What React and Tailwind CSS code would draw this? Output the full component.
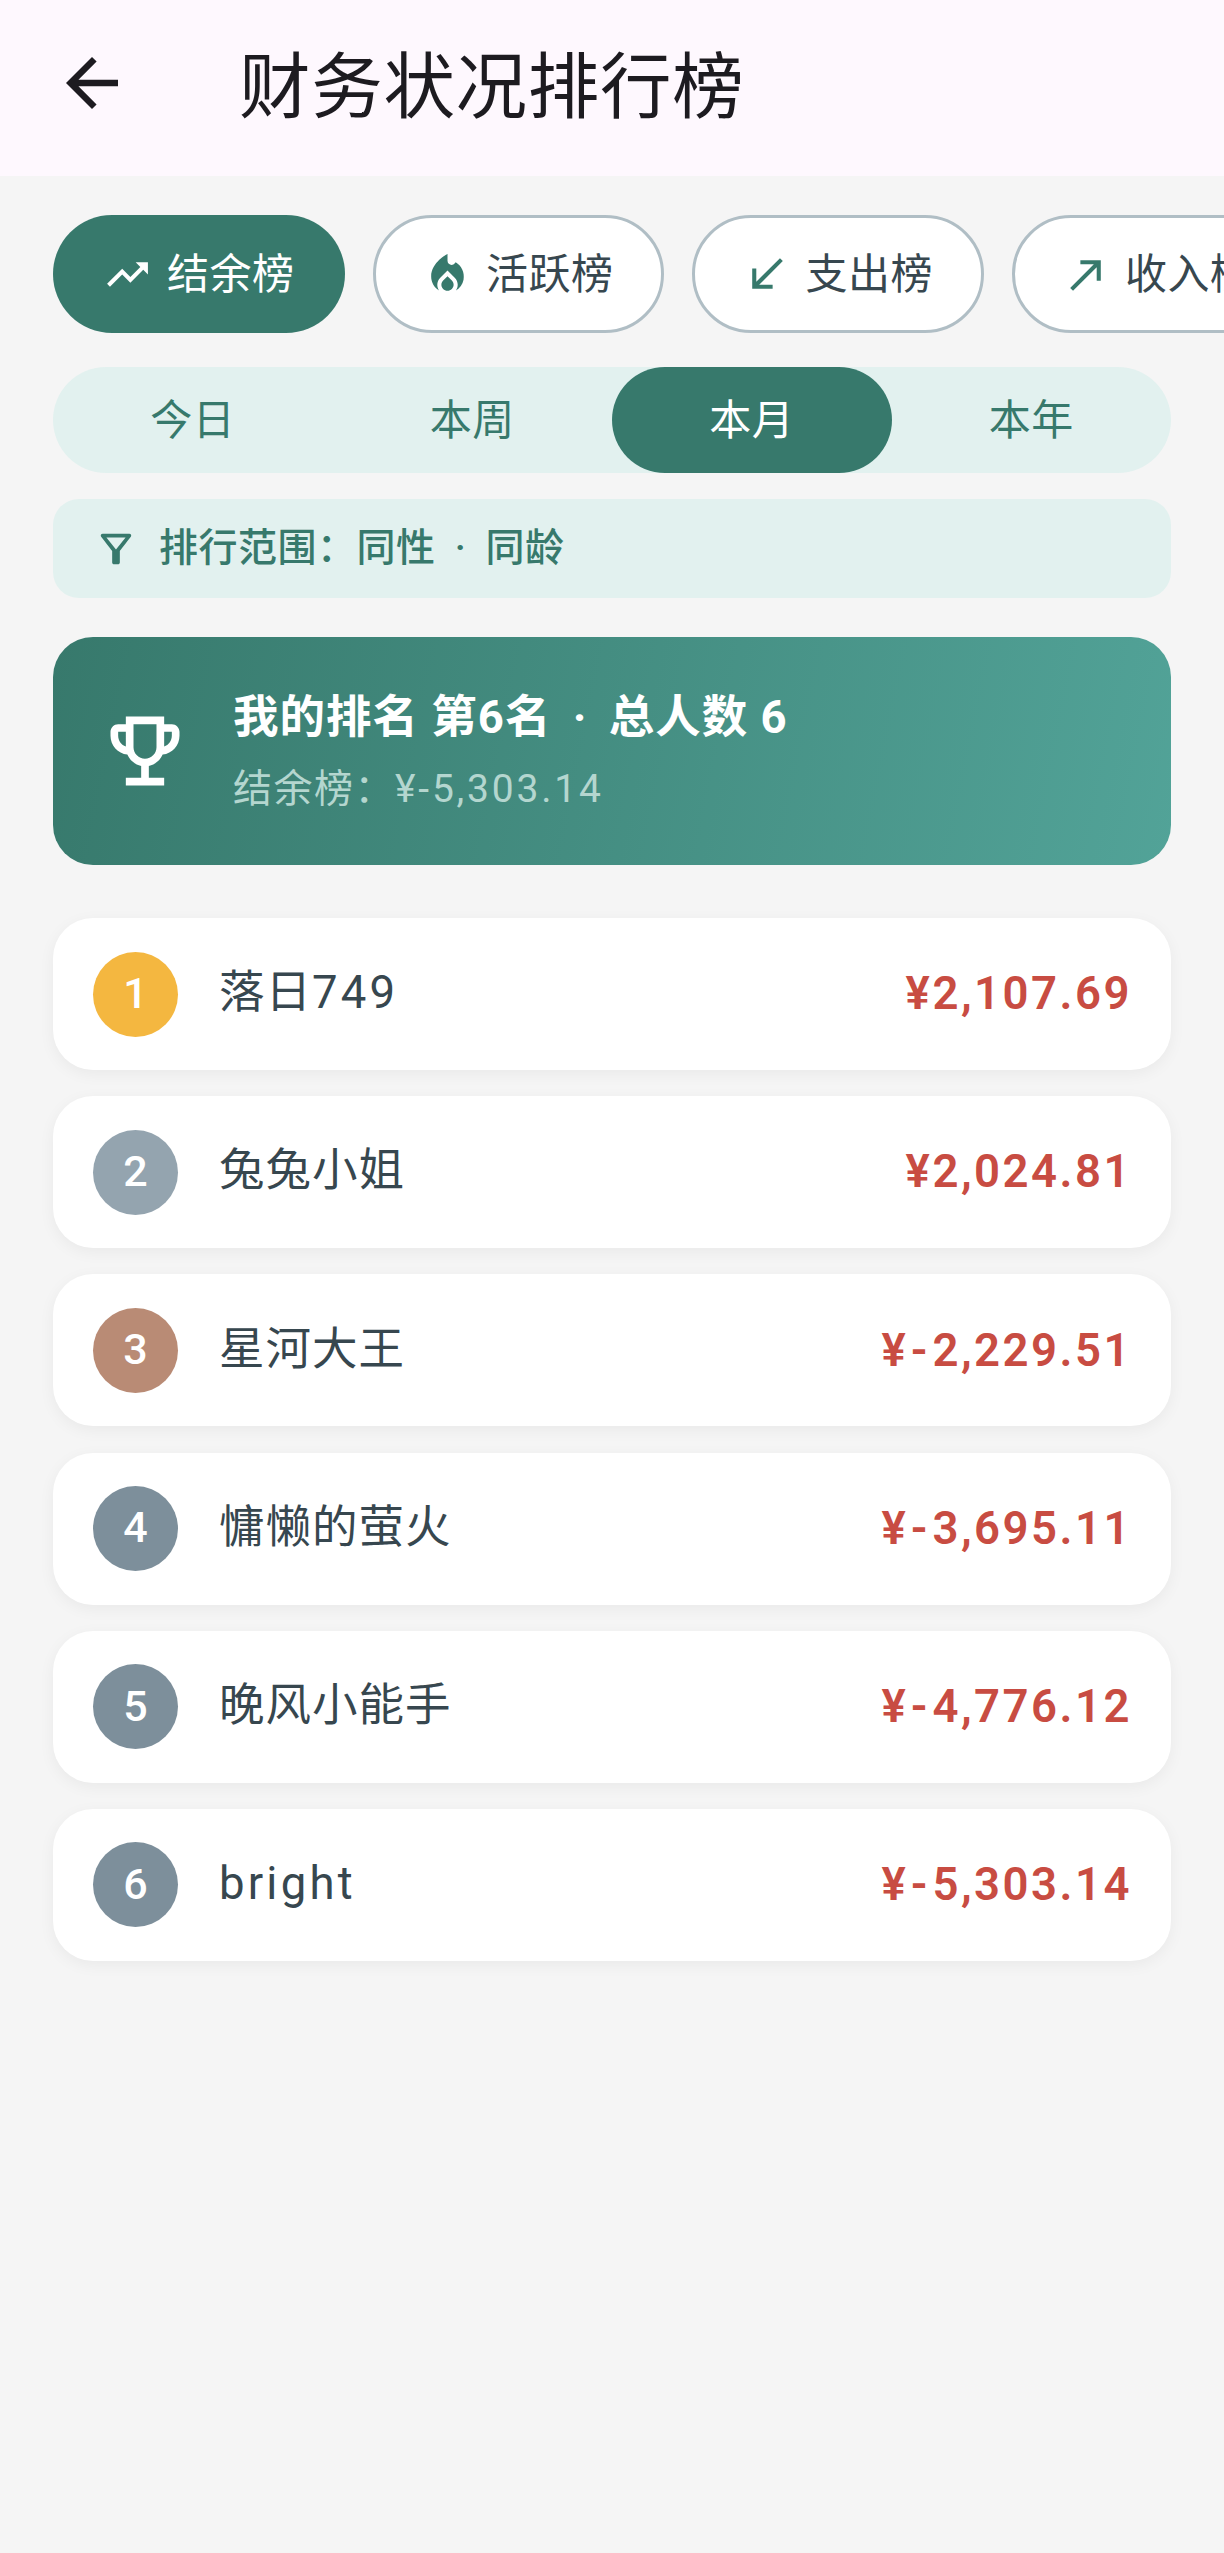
const font = { fontFamily: 'Roboto, "Noto Sans CJK SC", "Noto Sans", sans-serif' };

function Icon({ d, className }) {
  return (
    <svg viewBox="0 0 24 24" fill="currentColor" className={className}>
      <path d={d} />
    </svg>
  );
}

const icons = {
  back: "M20 11H7.83l5.59-5.59L12 4l-8 8 8 8 1.41-1.41L7.83 13H20v-2z",
  up: "M16 6l2.29 2.29-4.88 4.88-4-4L2 16.59 3.41 18l6-6 4 4 6.3-6.29L22 12V6z",
  fire: "M12 12.9l-2.13 2.09C9.31 15.55 9 16.28 9 17.06 9 18.68 10.35 20 12 20s3-1.32 3-2.94c0-.78-.31-1.52-.87-2.07L12 12.9zM16 6l-.44.55C14.38 8.02 12 7.19 12 5.3V2S4 6 4 13c0 2.92 1.56 5.47 3.89 6.86-.56-.79-.89-1.76-.89-2.8 0-1.32.52-2.56 1.47-3.5L12 10.1l3.53 3.47c.95.93 1.47 2.17 1.47 3.5 0 1.02-.31 1.96-.85 2.75 1.89-1.15 3.29-3.06 3.71-5.3.66-3.55-1.07-6.9-3.86-8.52z",
  sw: "M15 19v-2H8.41L20 5.41 18.59 4 7 15.59V9H5v10h10z",
  ne: "M9 5v2h6.59L4 18.59 5.41 20 17 8.41V15h2V5H9z",
  filter: "M7 6h10l-5.01 6.3L7 6zm-2.75-.39C6.27 8.2 10 13 10 13v6c0 .55.45 1 1 1h2c.55 0 1-.45 1-1v-6s3.72-4.8 5.74-7.39c.51-.66.04-1.61-.79-1.61H5.04c-.83 0-1.3.95-.79 1.61z",
  trophy: "M19 5h-2V3H7v2H5c-1.1 0-2 .9-2 2v1c0 2.55 1.92 4.63 4.39 4.94.63 1.5 1.98 2.63 3.61 2.96V19H7v2h10v-2h-4v-3.1c1.63-.33 2.98-1.46 3.61-2.96C19.08 12.63 21 10.55 21 8V7c0-1.1-.9-2-2-2zM5 8V7h2v3.82C5.84 10.4 5 9.3 5 8zm7 6c-1.65 0-3-1.35-3-3V5h6v6c0 1.65-1.35 3-3 3zm7-6c0 1.3-.84 2.4-2 2.82V7h2v1z",
};

const chips = [
  { icon: "up", label: "结余榜", active: true },
  { icon: "fire", label: "活跃榜" },
  { icon: "sw", label: "支出榜" },
  { icon: "ne", label: "收入榜" },
];

const rows = [
  { n: 1, name: "落日", latin: "749", amount: "2,107.69", color: "bg-[#f4b740]" },
  { n: 2, name: "兔兔小姐", amount: "2,024.81", color: "bg-[#94a4af]" },
  { n: 3, name: "星河大王", neg: true, amount: "2,229.51", color: "bg-[#b98b75]" },
  { n: 4, name: "慵懒的萤火", neg: true, amount: "3,695.11", color: "bg-[#7d8f9b]" },
  { n: 5, name: "晚风小能手", neg: true, amount: "4,776.12", color: "bg-[#7d8f9b]" },
  { n: 6, name: "", latin: "bright", neg: true, amount: "5,303.14", color: "bg-[#7d8f9b]" },
];

export default function App() {
  return (
    <div style={font} className="w-[1224px] h-[2553px] overflow-hidden bg-[#f5f5f5]">
      <header className="h-[176px] bg-[#fef8fe] flex items-center pl-[53px]">
        <Icon d={icons.back} className="w-[78px] h-[78px] text-[#1d1b20] shrink-0 -translate-y-[5px]" />
        <h1 className="ml-[108px] text-[71.5px] leading-none font-normal text-[#1d1b20] tracking-[0.7px]">财务状况排行榜</h1>
      </header>

      <div className="flex gap-[28px] mt-[39px] pl-[53px] overflow-hidden">
        {chips.map((c) => (
          <div
            key={c.label}
            className={
              c.active
                ? "w-[291.5px] h-[118px] shrink-0 rounded-[59px] bg-[#37796c] flex items-center justify-center gap-[15px] text-white"
                : "w-[291.5px] h-[118px] shrink-0 rounded-[59px] bg-white border-[3px] border-[#b0bec5] flex items-center justify-center gap-[14px] text-[#37474f]"
            }
          >
            <Icon d={icons[c.icon]} className={c.active ? "w-[49px] h-[49px] text-white" : "w-[49px] h-[49px] text-[#37796c]"} />
            <span className="text-[42px] leading-none tracking-[0.5px] translate-y-[1px]">{c.label}</span>
          </div>
        ))}
      </div>

      <div className="mx-[53px] mt-[34px] h-[106px] rounded-[53px] bg-[#e2f1ef] grid grid-cols-4">
        {["今日", "本周", "本月", "本年"].map((t) => (
          <div
            key={t}
            className={
              t === "本月"
                ? "rounded-[53px] bg-[#37796c] text-white flex items-center justify-center text-[42px] tracking-[0.5px]"
                : "rounded-[53px] text-[#37796c] flex items-center justify-center text-[42px] tracking-[0.5px]"
            }
          >
            {t}
          </div>
        ))}
      </div>

      <div className="mx-[53px] mt-[26px] h-[99px] rounded-[26px] bg-[#e2f1ef] flex items-center pl-[40px] gap-[20px] text-[#37796c]">
        <Icon d={icons.filter} className="w-[46px] h-[46px]" />
        <span className="text-[39px] font-medium leading-none tracking-[0.5px]">
          排行范围：同性<span className="mx-[9px]"> · </span>同龄
        </span>
      </div>

      <div className="mx-[53px] mt-[39px] h-[228px] rounded-[40px] bg-[linear-gradient(101.5deg,#37796c,#52a398)] flex items-center pl-[46px] text-white">
        <Icon d={icons.trophy} className="w-[92px] h-[92px] shrink-0" />
        <div className="ml-[42px] flex flex-col gap-[29px] translate-y-[1px]">
          <div className="text-[45.5px] font-bold leading-none tracking-[1px]">
            我的排名 第6名<span className="mx-[9px]"> · </span>总人数 6
          </div>
          <div className="text-[39px] leading-none text-[#b4d6cf] tracking-[1.5px]">
            结余榜：<span className="tracking-[2.8px]">¥-5,303.14</span>
          </div>
        </div>
      </div>

      <div className="mx-[53px] mt-[53px] flex flex-col gap-[26.2px]">
        {rows.map((r) => (
          <div key={r.n} className="h-[152px] rounded-[40px] bg-white shadow-[0_4px_16px_rgba(0,0,0,0.05)] flex items-center pl-[40px] pr-[39px]">
            <div className={"w-[85px] h-[85px] rounded-full flex items-center justify-center text-white text-[43px] font-medium shrink-0 " + r.color}>
              <span className="-translate-y-[1px]">{r.n}</span>
            </div>
            <div className="ml-[41px] text-[45.5px] leading-none text-[#37474f] tracking-[1px] -translate-y-[1px]">
              {r.name}
              {r.latin ? <span className="tracking-[3.2px]">{r.latin}</span> : null}
            </div>
            <div className="ml-auto text-[45.5px] font-semibold leading-none text-[#c84c42] tracking-[2.5px]">
              ¥{r.neg ? <span className="mx-[2.5px]">-</span> : null}{r.amount}
            </div>
          </div>
        ))}
      </div>
    </div>
  );
}
